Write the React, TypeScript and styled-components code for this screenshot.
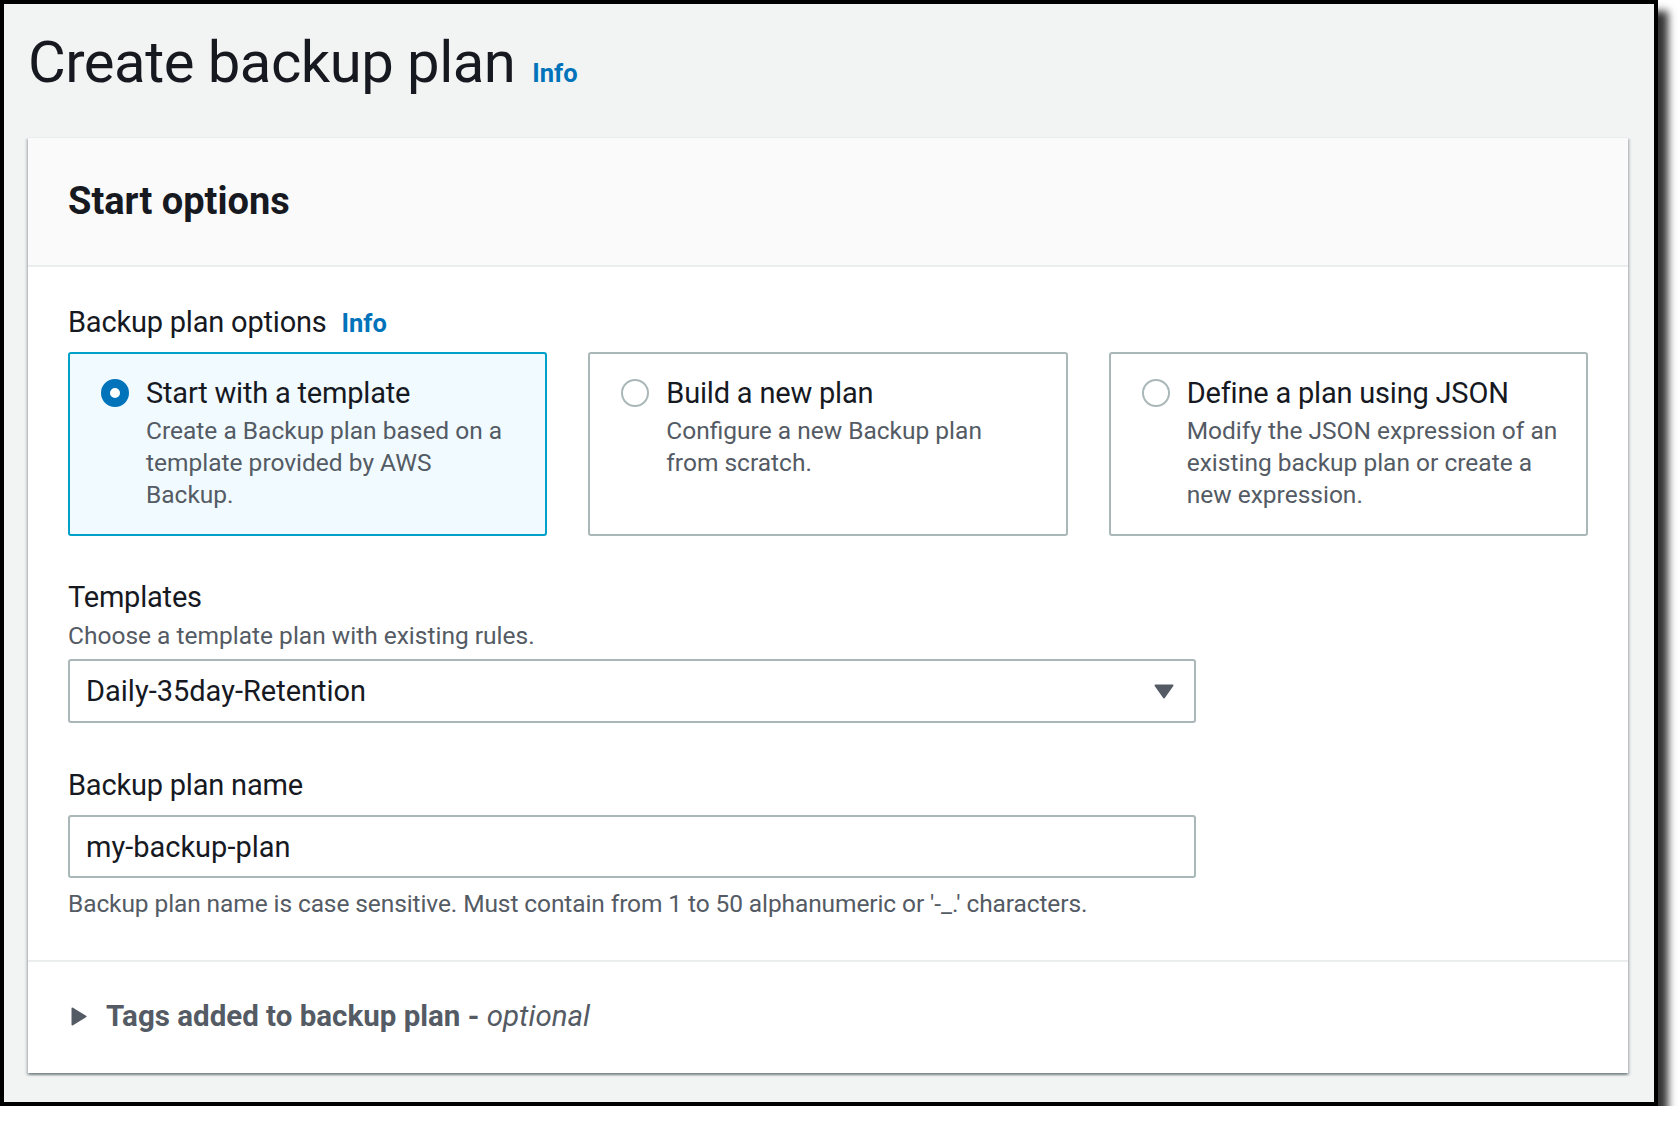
import React, { useState } from "react";
import styled, { createGlobalStyle } from "styled-components";

type PlanOption = {
  id: string;
  title: string;
  lines: string[];
};

const planOptions: PlanOption[] = [
  {
    id: "template",
    title: "Start with a template",
    lines: ["Create a Backup plan based on a", "template provided by AWS", "Backup."],
  },
  {
    id: "new",
    title: "Build a new plan",
    lines: ["Configure a new Backup plan", "from scratch."],
  },
  {
    id: "json",
    title: "Define a plan using JSON",
    lines: ["Modify the JSON expression of an", "existing backup plan or create a", "new expression."],
  },
];

const App = () => {
  const [selected, setSelected] = useState("template");

  return (
    <>
      <GlobalStyle />
      <Frame>
        <PageHeader>
          <Title>Create backup plan</Title>
          <InfoLink href="#">Info</InfoLink>
        </PageHeader>

        <Container>
          <ContainerHeader>
            <Heading>Start options</Heading>
          </ContainerHeader>

          <ContainerBody>
            <LabelRow>
              <FieldLabel>Backup plan options</FieldLabel>
              <InfoLink href="#">Info</InfoLink>
            </LabelRow>

            <TileGrid>
              {planOptions.map((opt) => {
                const active = opt.id === selected;
                return (
                  <Tile key={opt.id} $active={active} onClick={() => setSelected(opt.id)}>
                    <Radio $checked={active} />
                    <TileText>
                      <TileTitle>{opt.title}</TileTitle>
                      {opt.lines.map((line) => (
                        <TileLine key={line}>{line}</TileLine>
                      ))}
                    </TileText>
                  </Tile>
                );
              })}
            </TileGrid>

            <Field $gap={41}>
              <FieldLabel>Templates</FieldLabel>
              <FieldDescription>Choose a template plan with existing rules.</FieldDescription>
              <SelectBox>
                <span>Daily-35day-Retention</span>
                <svg width="20" height="15" viewBox="0 0 20 15">
                  <path d="M1.5 1.5 L18.5 1.5 L10 13.5 Z" fill="#545b64" stroke="#545b64" strokeWidth="2" strokeLinejoin="round" />
                </svg>
              </SelectBox>
            </Field>

            <Field $gap={42}>
              <FieldLabel>Backup plan name</FieldLabel>
              <TextInput defaultValue="my-backup-plan" />
              <Hint>
                Backup plan name is case sensitive. Must contain from 1 to 50 alphanumeric or '-_.' characters.
              </Hint>
            </Field>
          </ContainerBody>

          <ContainerFooter>
            <svg width="16" height="19" viewBox="0 0 16 19">
              <path d="M1.5 1.5 L14.5 9.5 L1.5 17.5 Z" fill="#545b64" stroke="#545b64" strokeWidth="2" strokeLinejoin="round" />
            </svg>
            <ExpandLabel>
              <strong>Tags added to backup plan -</strong> <em>optional</em>
            </ExpandLabel>
          </ContainerFooter>
        </Container>
      </Frame>
    </>
  );
};

const GlobalStyle = createGlobalStyle`
  html, body {
    margin: 0;
    background: #ffffff;
  }
  body {
    font-family: Roboto, "Noto Sans", Arial, sans-serif;
    color: #16191f;
  }
  * {
    box-sizing: border-box;
  }
`;

const Frame = styled.div`
  width: 1658px;
  height: 1106px;
  border: 4px solid #000;
  background: #f2f3f3;
  box-shadow: 10px 11px 8px rgba(0, 0, 0, 0.8);
  padding: 23px 26px 0 24px;
`;

const PageHeader = styled.div`
  display: flex;
  align-items: baseline;
  gap: 17px;
  margin-bottom: 40px;
`;

const Title = styled.h1`
  margin: 0;
  font-size: 58px;
  line-height: 70px;
  font-weight: 400;
  color: #16191f;
  letter-spacing: -0.5px;
`;

const InfoLink = styled.a`
  font-size: 25.5px;
  font-weight: 700;
  color: #0073bb;
  text-decoration: none;
`;

const Container = styled.div`
  width: 1600px;
  background: #fff;
  box-shadow: 0 2px 2px 0 rgba(0, 28, 36, 0.3), 2px 2px 2px 0 rgba(0, 28, 36, 0.15),
    -2px 2px 2px 0 rgba(0, 28, 36, 0.15);
  border-top: 1px solid #eaeded;
`;

const ContainerHeader = styled.div`
  background: #fafafa;
  border-bottom: 2px solid #eaeded;
  padding: 40px 40px 41px;
`;

const Heading = styled.h2`
  margin: 0;
  font-size: 38px;
  line-height: 46px;
  font-weight: 700;
`;

const ContainerBody = styled.div`
  padding: 35px 40px 40px;
  border-bottom: 2px solid #eaeded;
`;

const LabelRow = styled.div`
  display: flex;
  align-items: baseline;
  gap: 15px;
`;

const FieldLabel = styled.div`
  font-size: 29px;
  line-height: 40px;
  letter-spacing: -0.2px;
`;

const TileGrid = styled.div`
  display: grid;
  grid-template-columns: repeat(3, 1fr);
  gap: 41px;
  margin-top: 10px;
`;

const Tile = styled.div<{ $active: boolean }>`
  display: flex;
  align-items: flex-start;
  gap: 17px;
  height: 184px;
  padding: ${(p) => (p.$active ? "19px 20px 20px 31px" : "19px 20px 20px 31px")};
  border: ${(p) => (p.$active ? "2px solid #00a1c9" : "2px solid #aab7b8")};
  border-radius: 3px;
  background: ${(p) => (p.$active ? "#f1faff" : "#fff")};
  cursor: pointer;
`;

const Radio = styled.span<{ $checked: boolean }>`
  flex: none;
  width: 28px;
  height: 28px;
  margin-top: 6px;
  border-radius: 50%;
  background: #fff;
  border: ${(p) => (p.$checked ? "9px solid #0073bb" : "2px solid #aab7b8")};
`;

const TileText = styled.div`
  display: flex;
  flex-direction: column;
  white-space: nowrap;
`;

const TileTitle = styled.div`
  font-size: 29px;
  line-height: 40px;
  letter-spacing: -0.2px;
  color: #16191f;
  margin-bottom: 2px;
`;

const TileLine = styled.div`
  font-size: 24.5px;
  line-height: 32px;
  color: #545b64;
`;

const Field = styled.div<{ $gap: number }>`
  margin-top: ${(p) => p.$gap}px;
  display: flex;
  flex-direction: column;
`;

const FieldDescription = styled.div`
  font-size: 24.5px;
  line-height: 32px;
  color: #545b64;
  margin-top: 3px;
  margin-bottom: 7px;
`;

const SelectBox = styled.div`
  width: 1128px;
  height: 64px;
  border: 2px solid #aab7b8;
  border-radius: 3px;
  display: flex;
  align-items: center;
  justify-content: space-between;
  padding: 0 20px 0 16px;
  font-size: 29px;
  line-height: 40px;
  color: #16191f;
`;

const TextInput = styled.input`
  width: 1128px;
  height: 63px;
  margin-top: 10px;
  border: 2px solid #aab7b8;
  border-radius: 3px;
  padding: 0 16px;
  font-family: Roboto, "Noto Sans", Arial, sans-serif;
  font-size: 29px;
  color: #16191f;
  background: #fff;
  outline: none;
`;

const Hint = styled.div`
  font-size: 24.5px;
  line-height: 32px;
  letter-spacing: -0.1px;
  color: #545b64;
  margin-top: 10px;
`;

const ContainerFooter = styled.div`
  display: flex;
  align-items: center;
  gap: 19px;
  padding: 34px 40px 37px 43px;
`;

const ExpandLabel = styled.div`
  font-size: 29.5px;
  line-height: 40px;
  color: #545b64;

  strong {
    font-weight: 700;
  }
  em {
    font-style: italic;
    font-weight: 400;
  }
`;

export default App;
